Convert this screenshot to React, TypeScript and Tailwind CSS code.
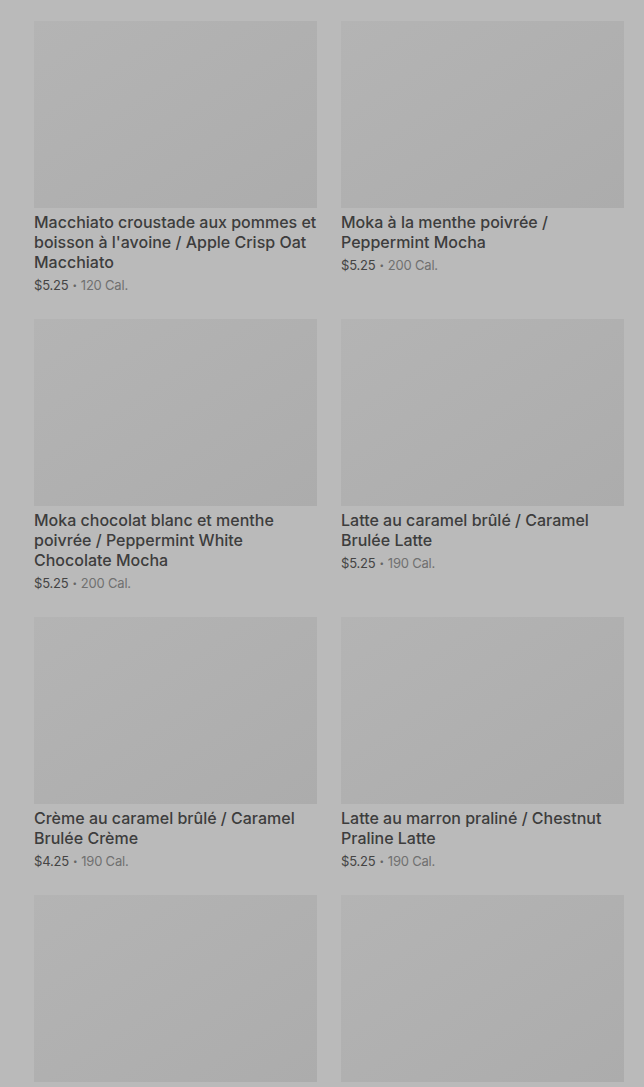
const items = [
  { name: "Macchiato croustade aux pommes et boisson à l'avoine / Apple Crisp Oat Macchiato", price: "$5.25", cal: "120 Cal." },
  { name: "Moka à la menthe poivrée / Peppermint Mocha", price: "$5.25", cal: "200 Cal." },
  { name: "Moka chocolat blanc et menthe poivrée / Peppermint White Chocolate Mocha", price: "$5.25", cal: "200 Cal." },
  { name: "Latte au caramel brûlé / Caramel Brulée Latte", price: "$5.25", cal: "190 Cal." },
  { name: "Crème au caramel brûlé / Caramel Brulée Crème", price: "$4.25", cal: "190 Cal." },
  { name: "Latte au marron praliné / Chestnut Praline Latte", price: "$5.25", cal: "190 Cal." },
  { name: "", price: "", cal: "" },
  { name: "", price: "", cal: "" },
];

export default function App() {
  return (
    <div className="min-h-screen overflow-hidden bg-[#bababa] font-['Inter',sans-serif]">
      <div className="grid grid-cols-2 gap-x-6 gap-y-6 pl-[34px] pr-[20px] pt-[21px]">
        {items.map((item, i) => (
          <div key={i}>
            <div className="h-[187px] bg-gradient-to-br from-[#b4b4b4] to-[#acacac]" />
            {item.name && (
              <>
                <div className="mt-1 text-[16px] leading-5 font-medium text-[#3d3d3d]">{item.name}</div>
                <div className="mt-[3px] flex items-center text-[13px] leading-5 tracking-[-0.2px] text-[#444]">
                  <span>{item.price}</span>
                  <span className="px-[4px] text-[8px] text-[#666]">•</span>
                  <span className="text-[#707070]">{item.cal}</span>
                </div>
              </>
            )}
          </div>
        ))}
      </div>
    </div>
  );
}
